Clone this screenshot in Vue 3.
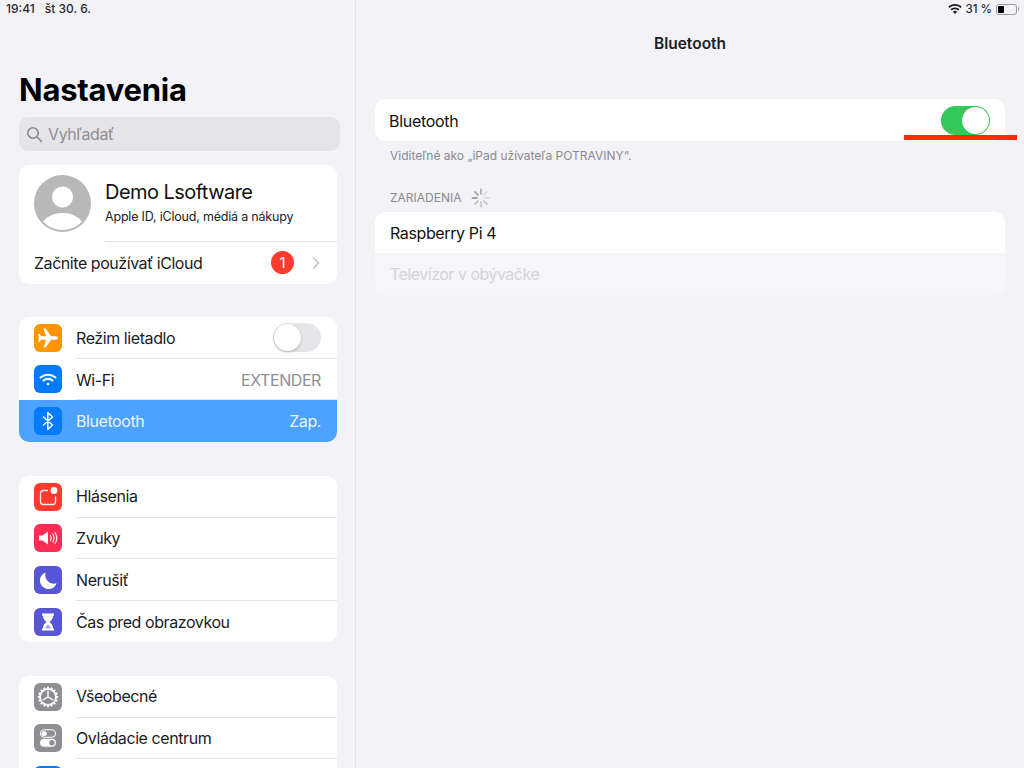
<script setup>
const mainGroups = [
  { cls: 'g2', rows: [
    { label: 'Režim lietadlo', icon: 'plane', color: '#ff9500', toggle: true },
    { label: 'Wi-Fi', icon: 'wifi', color: '#007aff', value: 'EXTENDER' },
    { label: 'Bluetooth', icon: 'bt', color: '#007aff', value: 'Zap.', active: true }
  ]},
  { cls: 'g3', rows: [
    { label: 'Hlásenia', icon: 'notif', color: '#ff3b30' },
    { label: 'Zvuky', icon: 'sound', color: '#ff2d55' },
    { label: 'Nerušiť', icon: 'moon', color: '#5856d6' },
    { label: 'Čas pred obrazovkou', icon: 'hour', color: '#5856d6' }
  ]},
  { cls: 'g4', rows: [
    { label: 'Všeobecné', icon: 'gear', color: '#8e8e93' },
    { label: 'Ovládacie centrum', icon: 'ctrl', color: '#8e8e93' },
    { label: '', icon: '', color: '#007aff' }
  ]}
]
const spokes = Array.from({ length: 8 }, (_, i) => i * 45)
const teeth = Array.from({ length: 16 }, (_, i) => i * 22.5)
</script>

<template>
  <div class="page">
    <aside class="side">
      <div class="status-left"><span>19:41</span><span>št 30. 6.</span></div>
      <h1 class="title">Nastavenia</h1>
      <div class="search">
        <svg width="17" height="17" viewBox="0 0 17 17" fill="none" stroke="#8a8a8e" stroke-width="1.6" stroke-linecap="round"><circle cx="7" cy="7" r="5.2"/><path d="M11 11l4.400 4.400"/></svg>
        <span>Vyhľadať</span>
      </div>

      <section class="group profile">
        <div class="profile-top">
          <svg class="avatar" width="57" height="57" viewBox="0 0 57 57">
            <defs><clipPath id="av"><circle cx="28.5" cy="28.5" r="26.5"/></clipPath></defs>
            <circle cx="28.5" cy="28.5" r="28.5" fill="#b8b8bb"/>
            <circle cx="28.5" cy="22" r="10.5" fill="#fff"/>
            <ellipse cx="28.5" cy="56" rx="23" ry="18" fill="#fff" clip-path="url(#av)"/>
          </svg>
          <div class="who">
            <div class="name">Demo Lsoftware</div>
            <div class="sub">Apple ID, iCloud, médiá a nákupy</div>
          </div>
        </div>
        <div class="icloud">
          <span>Začnite používať iCloud</span>
          <span class="badge">1</span>
          <svg width="8" height="12" viewBox="0 0 8 12" fill="none" stroke="#c4c4c7" stroke-width="1.6" stroke-linecap="round" stroke-linejoin="round"><path d="M1.500 1L6.500 6l-5 5"/></svg>
        </div>
      </section>

      <section v-for="g in mainGroups" :key="g.cls" class="group list" :class="g.cls">
        <div v-for="r in g.rows" :key="r.label" class="row" :class="{ active: r.active }">
          <span class="tile" :style="{ background: r.color }">
            <svg v-if="r.icon === 'plane'" width="24" height="24" viewBox="0 0 24 24" fill="#fff"><path d="M22 12c0-1-1-1.700-2.300-1.700h-4.600L9.700 2.500H7.600l2.500 7.800H5.300L3.500 8H2l1 4-1 4h1.500l1.800-2.300h4.800l-2.500 7.800h2.100l5.400-7.800h4.600C21 13.700 22 13 22 12z"/></svg>
            <svg v-else-if="r.icon === 'wifi'" width="24" height="24" viewBox="0 0 24 24" fill="none" stroke="#fff" stroke-width="2" stroke-linecap="round"><path d="M4.500 10.500c4.300-3.700 10.700-3.700 15 0"/><path d="M7.500 13.500c2.600-2.200 6.400-2.200 9 0"/><circle cx="12" cy="17" r="1.300" fill="#fff" stroke="none"/></svg>
            <svg v-else-if="r.icon === 'bt'" width="24" height="24" viewBox="0 0 24 24" fill="none" stroke="#fff" stroke-width="1.500" stroke-linejoin="round" stroke-linecap="round"><path d="M7.500 8l9 8-4.700 4.500v-17L16.500 8l-9 8"/></svg>
            <svg v-else-if="r.icon === 'notif'" width="28" height="28" viewBox="0 0 28 28" fill="none"><path d="M14 7.500H9.500a3 3 0 0 0-3 3v8a3 3 0 0 0 3 3h9a3 3 0 0 0 3-3V13.500" stroke="#fff" stroke-width="1.300" opacity=".9"/><circle cx="20" cy="7.500" r="3.400" fill="#fff"/></svg>
            <svg v-else-if="r.icon === 'sound'" width="28" height="28" viewBox="0 0 28 28" fill="none"><path d="M5 11.500h3.500L14 7.500v13l-5.500-4H5z" fill="#fff"/><path d="M16.500 11.500c1 1.500 1 3.500 0 5M18.800 10c1.600 2.500 1.600 5.500 0 8M21 8.500c2.300 3.500 2.300 7.500 0 11" stroke="#fff" stroke-width="1.100" stroke-linecap="round"/></svg>
            <svg v-else-if="r.icon === 'moon'" width="28" height="28" viewBox="0 0 28 28" fill="#fff"><path d="M11.800 6.500a8.500 8.500 0 1 0 10.700 10.800c-.9.300-1.800.4-2.700.4-4.800 0-8.600-3.800-8.600-8.600 0-.9.200-1.800.600-2.600z"/></svg>
            <svg v-else-if="r.icon === 'hour'" width="28" height="28" viewBox="0 0 28 28" fill="#fff"><path d="M8 5.500h12v2h-1c0 3.500-1.500 5-3.500 6.500 2 1.500 3.500 3 3.500 6.500h1v2H8v-2h1c0-3.500 1.500-5 3.500-6.500C10.500 12.500 9 11 9 7.500H8z"/><path d="M11.500 20.500c.2-1.800 1.200-3 2.500-3.800 1.300.8 2.300 2 2.500 3.800z" fill="#5856d6" opacity=".55"/></svg>
            <svg v-else-if="r.icon === 'gear'" width="28" height="28" viewBox="0 0 28 28" fill="none" stroke="#fff">
              <circle cx="14" cy="14" r="8" stroke-width="1.800"/>
              <path d="M14 14V8M14 14l5.200 3M14 14l-5.200 3" stroke-width="1.400"/>
              <path v-for="t in teeth" :key="t" d="M14 3.800v2.600" stroke-width="2" :transform="`rotate(${t} 14 14)`"/>
            </svg>
            <svg v-else-if="r.icon === 'ctrl'" width="28" height="28" viewBox="0 0 28 28" fill="none">
              <rect x="6.500" y="5.800" width="15" height="7.400" rx="3.700" stroke="#fff" stroke-width="1.100"/>
              <circle cx="10.200" cy="9.500" r="2.600" fill="#fff"/>
              <rect x="6" y="14.800" width="16" height="8" rx="4" fill="#fff"/>
              <circle cx="18" cy="18.800" r="2.700" fill="#8e8e93"/>
            </svg>
          </span>
          <span class="row-body">
            <span class="row-label">{{ r.label }}</span>
            <span v-if="r.value" class="row-value">{{ r.value }}</span>
            <span v-if="r.toggle" class="sw-off"><i></i></span>
          </span>
        </div>
      </section>
    </aside>

    <main class="detail">
      <div class="status-right">
        <svg width="14" height="10" viewBox="0 0 14 10" fill="#1c1c1e"><path d="M7 0C4.400 0 2.100 1 .3 2.700l1.200 1.300C3 2.600 4.900 1.800 7 1.800s4 .8 5.500 2.200l1.200-1.300C11.900 1 9.600 0 7 0z"/><path d="M7 3.400c-1.700 0-3.300.7-4.400 1.800l1.200 1.300c.8-.8 2-1.300 3.200-1.300s2.400.5 3.200 1.300l1.200-1.300C10.300 4.100 8.700 3.400 7 3.400z"/><path d="M7 6.800c-.8 0-1.500.3-2.100.9L7 10l2.100-2.300c-.6-.6-1.300-.9-2.100-.9z"/></svg>
        <span>31 %</span>
        <span class="batt"><i></i></span>
      </div>
      <h2 class="nav-title">Bluetooth</h2>
      <div class="group bt-row">
        <span>Bluetooth</span>
        <span class="sw-on"><i></i></span>
      </div>
      <p class="note">Viditeľné ako „iPad užívateľa POTRAVINY“.</p>
      <div class="sec-head">
        <span>ZARIADENIA</span>
        <svg width="20" height="20" viewBox="0 0 20 20" stroke-width="1.800" stroke-linecap="round">
          <path v-for="(a, i) in spokes" :key="a" d="M10 1.500v4.500" :stroke="i === 0 ? '#b0b0b4' : i < 3 ? '#e0e0e3' : i < 6 ? '#c8c8cb' : '#a8a8ac'" :transform="`rotate(${a} 10 10)`"/>
        </svg>
      </div>
      <div class="group devices">
        <div class="dev">Raspberry Pi 4</div>
        <div class="dev off">Televízor v obývačke</div>
      </div>
      <div class="marker"></div>
    </main>
  </div>
</template>

<style>
html, body { margin: 0; background: #f2f2f7; }
</style>

<style scoped>
.page {
  width: 1024px; height: 768px; display: flex; overflow: hidden;
  background: #f2f2f7; color: #1c1c1e;
  font-family: Inter, "Noto Sans", "Liberation Sans", sans-serif;
}
.side {
  width: 356px; height: 768px; flex: none; box-sizing: border-box;
  border-right: 1px solid #e4e4e8; overflow: hidden;
  padding: 0 18px 0 19px;
}
.status-left {
  display: flex; gap: 10px; height: 18px;
  margin-left: -13px; font-size: 12px; line-height: 18px; color: #2a2a2c; font-weight: 500;
}
.title { margin: 53px 0 0; font-size: 31px; line-height: 38px; font-weight: 700; color: #000; letter-spacing: -.25px; }
.search {
  margin-top: 8px; width: 321px; height: 34px; border-radius: 9px; background: #e4e4e9;
  display: flex; align-items: center; gap: 5px; padding-left: 7px; box-sizing: border-box;
  font-size: 16px; color: #8e8e93; letter-spacing: -.4px;
}
.group { background: #fff; border-radius: 10px; overflow: hidden; }
.profile { margin-top: 14px; height: 119px; }
.profile-top { display: flex; height: 76px; align-items: flex-start; padding: 10px 0 0 15px; box-sizing: border-box; }
.who { margin-left: 14px; }
.name { font-size: 20px; line-height: 24px; margin-top: 5px; color: #111; letter-spacing: -.55px; }
.sub { font-size: 12.500px; line-height: 16px; margin-top: 5px; color: #222; letter-spacing: -.2px; }
.icloud {
  margin-left: 15px; height: 43px; display: flex; align-items: center; font-size: 16px;
  position: relative; padding-right: 17px; letter-spacing: -.45px;
}
.icloud::before { content: ""; position: absolute; left: 71px; right: 0; top: 0; height: 1px; background: #e5e5e8; }
.icloud > span:first-child { flex: 1; }
.badge {
  width: 23px; height: 23px; border-radius: 50%; background: #ff3b30; color: #fff;
  font-size: 15px; line-height: 23px; text-align: center; margin-right: 18px; letter-spacing: 0;
}
.list { margin-top: 33px; }
.g3, .g4 { margin-top: 34px; }
.g3 { height: 166px; }
.row { height: 41.670px; display: flex; align-items: center; padding-left: 15px; }
.tile {
  width: 28px; height: 28px; border-radius: 6px; flex: none;
  display: flex; align-items: center; justify-content: center;
}
.row-body {
  flex: 1; height: 100%; margin-left: 14px; padding-right: 16px; display: flex; align-items: center;
  justify-content: space-between; font-size: 16px; border-bottom: 1px solid #e5e5e8; box-sizing: border-box;
  letter-spacing: -.42px;
}
.row:last-child .row-body { border-bottom: 0; }
.g2 .row:not(.active) .row-body { padding-top: 1px; }
.g2 .row:nth-child(2) .row-body { padding-top: 2px; }
.row-value { color: #8e8e93; }
.row.active { background: #4da2ff; }
.row.active .row-body { color: #eaf4ff; border-bottom: 0; }
.row.active .row-value { color: #eaf4ff; }
.sw-off {
  width: 48px; height: 29px; border-radius: 15px; background: #e5e5ea; display: block; box-sizing: border-box;
  padding: 1px;
}
.sw-off i {
  display: block; width: 27px; height: 27px; border-radius: 50%; background: #fff;
  box-shadow: 0 1px 3px rgba(0,0,0,.25);
}
.detail { flex: 1; height: 768px; position: relative; padding: 0 19px; box-sizing: border-box; min-width: 0; }
.status-right {
  position: absolute; top: 1px; right: 7px; height: 16px; display: flex; align-items: center; gap: 4px;
  font-size: 11.500px; font-weight: 500; color: #2a2a2c;
}
.batt {
  width: 21px; height: 11px; border: 1px solid #9a9a9e; border-radius: 3px; display: block; padding: 1px;
  box-sizing: border-box; position: relative;
}
.batt::after { content: ""; position: absolute; right: -3px; top: 2.500px; width: 1.500px; height: 4px; background: #9a9a9e; border-radius: 0 1px 1px 0; }
.batt i { display: block; width: 6px; height: 7px; background: #000; border-radius: 1px; }
.nav-title {
  margin: 0; padding-top: 34px; height: 66px; box-sizing: border-box; text-align: center;
  font-size: 15.500px; line-height: 20px; font-weight: 600; color: #1c1c1e;
}
.bt-row {
  margin-top: 33px; height: 42px; display: flex; align-items: center; justify-content: space-between;
  padding: 1px 15px 0 14px; box-sizing: border-box; font-size: 16px; color: #111; letter-spacing: -.3px;
}
.sw-on {
  width: 49px; height: 29px; border-radius: 15px; background: #34c759; display: flex;
  justify-content: flex-end; align-items: center; padding: 0 1px; box-sizing: border-box;
}
.sw-on i { display: block; width: 27px; height: 27px; border-radius: 50%; background: #fff; }
.note { margin: 8px 0 0 15px; font-size: 12px; line-height: 14px; color: #8a8a8e; }
.sec-head {
  display: flex; align-items: center; gap: 10px; margin: 24px 0 0 15px; height: 24px; padding-bottom: 3px; box-sizing: border-box;
  font-size: 12px; color: #8a8a8e;
}
.devices { margin-top: 1px; background: transparent; }
.dev { height: 41px; background: #fff; padding-left: 15px; font-size: 16px; line-height: 43px; color: #111; letter-spacing: -.38px; }
.dev.off { height: 42px; background: #f6f6fa; color: #d4d4d8; letter-spacing: -.5px; }
.marker {
  position: absolute; left: 548px; top: 135px; width: 113px; height: 5px; background: #fb2a00;
}
</style>
